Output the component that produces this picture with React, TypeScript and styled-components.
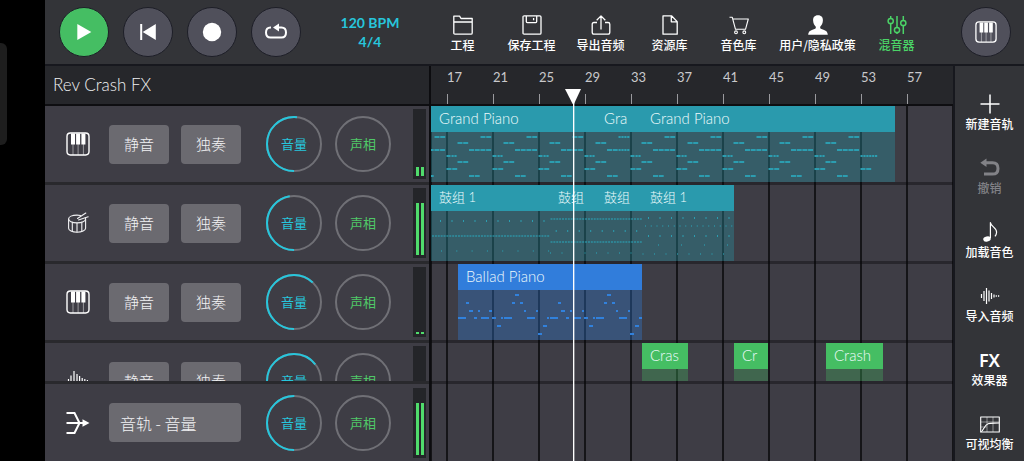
import React, { useId, useState } from 'react';
import styled, { createGlobalStyle, css } from 'styled-components';

const color = {
  bar: '#333438',
  edge: '#17181e',
  ruler: '#26272b',
  row: '#3e3d45',
  divider: '#29292d',
  control: '#6b6a70',
  round: '#50505b',
  cyan: '#27c6dc',
  green: '#4bd367',
  text: '#f2f2f4',
};

const LATIN = "Lato, 'Noto Sans CJK SC', sans-serif";
const CJK = "'Noto Sans CJK SC', 'Noto Sans', sans-serif";

const FIRST_BAR = 17;
const BAR_OFFSET = 15;
const FOUR_BARS = 46;

const barX = (bar: number) =>
  Math.max(0, Math.round(((bar - FIRST_BAR) * FOUR_BARS) / 4 + BAR_OFFSET));

const GlobalStyle = createGlobalStyle`
  * { box-sizing: border-box; }
  body { margin: 0; background: #000; overflow: hidden; }
  button { border: 0; padding: 0; margin: 0; background: none; font: inherit; color: inherit; cursor: pointer; }
`;

/* ---------- shell ---------- */

const Shell = styled.div`
  display: flex;
  flex-direction: column;
  height: 100vh;
  padding-left: 45px;
  background: #000;
  color: ${color.text};
  font-family: ${CJK};
`;

const Notch = styled.div`
  position: absolute;
  left: 0;
  top: 43px;
  width: 7px;
  height: 102px;
  border-radius: 0 6px 6px 0;
  background: #1e1e1e;
`;

const Header = styled.header`
  display: flex;
  flex: none;
  height: 66px;
  padding: 0 13px 0 14px;
  background: ${color.bar};
  border-bottom: 2px solid ${color.edge};
`;

const Transport = styled.div`
  display: flex;
  align-items: center;
  gap: 14px;
`;

const RoundButton = styled.button<{ $active?: boolean }>`
  display: flex;
  align-items: center;
  justify-content: center;
  width: 50px;
  height: 50px;
  border: 1px solid #1d1e27;
  border-radius: 50%;
  background: ${(p) => (p.$active ? '#45be63' : color.round)};
`;

const Tempo = styled.button`
  && {
    flex: 1;
    padding: 13px 0 0 11px;
    align-self: flex-start;
    color: ${color.cyan};
    font: 700 14px/19px ${LATIN};
  }
`;

const TempoLine = styled.span`
  display: block;
`;

const Menu = styled.nav`
  display: flex;
  align-items: flex-start;
  padding-top: 15px;
  margin-right: 30px;
`;

const Tool = styled.button<{ $wide?: boolean; $tone?: 'green' | 'dim' }>`
  display: flex;
  flex-direction: column;
  align-items: center;
  gap: 1px;
  width: ${(p) => (p.$wide ? 89 : 69)}px;
  color: ${(p) => (p.$tone === 'green' ? color.green : p.$tone === 'dim' ? '#828287' : '#fff')};
`;

const ToolLabel = styled.span`
  font: 500 12px/18px ${CJK};
  white-space: nowrap;
`;

const FxMark = styled.span`
  font: 600 18px/20px 'Noto Sans', sans-serif;
`;

const Body = styled.main`
  display: flex;
  flex: 1;
  min-height: 0;
`;

const Column = styled.section`
  display: flex;
  flex-direction: column;
  min-width: 0;
  background: ${color.row};
`;

const TrackColumn = styled(Column)`
  flex: none;
  width: 386px;
  border-right: 2px solid #0c0c0f;
`;

const stripHead = css`
  flex: none;
  height: 40px;
  background: ${color.ruler};
  border-bottom: 2px solid #0e0e11;
`;

const TrackTitle = styled.h1`
  ${stripHead}
  margin: 0;
  padding-left: 8px;
  font: 300 17px/38px ${LATIN};
  color: #f0f0f2;
`;

const Scroller = styled.div`
  flex: 1;
  min-height: 0;
  overflow: hidden;
`;

/* ---------- track rows ---------- */

const TrackRow = styled.div<{ $master?: boolean }>`
  display: flex;
  flex: none;
  align-items: center;
  height: ${(p) => (p.$master ? 80 : 79)}px;
  padding: 0 3px 0 21px;
  border: 0 solid ${color.divider};
  border-width: ${(p) => (p.$master ? '3px 0 0' : '0 0 3px')};
`;

const Switches = styled.div`
  display: flex;
  gap: 12px;
  width: 132px;
  margin: 0 25px 0 19px;
`;

const SwitchButton = styled.button<{ $left?: boolean }>`
  flex: 1;
  height: 39px;
  border-radius: 4px;
  background: ${color.control};
  && {
    padding: ${(p) => (p.$left ? '0 0 0 11px' : 0)};
    text-align: ${(p) => (p.$left ? 'left' : 'center')};
    font: 300 ${(p) => (p.$left ? 16 : 15)}px/22px ${CJK};
  }
`;

const Knobs = styled.div`
  display: flex;
  gap: 13px;
`;

const KnobLabel = styled.label<{ $tone: string }>`
  display: grid;
  place-items: center;
  width: 56px;
  height: 56px;
  color: ${(p) => p.$tone};
  font: 400 13px/18px ${CJK};
  > * { grid-area: 1 / 1; }
`;

const KnobInput = styled.input`
  width: 100%;
  height: 100%;
  margin: 0;
  opacity: 0;
`;

const Meter = styled.div`
  display: flex;
  align-items: flex-end;
  justify-content: center;
  gap: 2px;
  width: 13px;
  height: 70px;
  margin-left: auto;
  padding-bottom: 3px;
  background: #242529;
`;

const MeterBar = styled.span`
  width: 3px;
  background: #50dc6c;
`;

/* ---------- timeline ---------- */

const Timeline = styled(Column)`
  position: relative;
  flex: 1;
  overflow: hidden;
`;

const Ruler = styled.div`
  ${stripHead}
  display: flex;
  padding-left: 15px;
  overflow: hidden;
`;

const RulerMark = styled.div`
  display: flex;
  flex: none;
  flex-direction: column;
  justify-content: space-between;
  width: ${FOUR_BARS}px;
  padding: 2px 0 0 1px;
  font: 400 13px/18px ${LATIN};
  color: #c9c9cc;
  &::after {
    content: '';
    width: 1px;
    height: 10px;
    background: #9a9a9e;
  }
`;

const grid = css`
  background: repeating-linear-gradient(90deg, #151518 0 2px, transparent 2px ${FOUR_BARS}px) 15px 0;
`;

const LaneScroller = styled(Scroller)`
  ${grid}
`;

const Lane = styled.div`
  position: relative;
  height: 79px;
  border-bottom: 3px solid rgba(8, 8, 10, 0.4);
`;

const MasterLane = styled.div`
  ${grid}
  flex: none;
  height: 80px;
  border-top: 3px solid rgba(8, 8, 10, 0.4);
`;

const tones = {
  teal: { solid: '#2a9aad', body: 'rgba(42,154,173,0.34)', note: '#2c9db0' },
  blue: { solid: '#317ddb', body: 'rgba(49,125,219,0.34)', note: '#3181dc' },
  green: { solid: '#45be63', body: 'rgba(69,190,99,0.32)', note: '#45be63' },
};
type Tone = keyof typeof tones;

const ClipBox = styled.div<{ $tone: Tone }>`
  position: absolute;
  top: 0;
  height: 76px;
  overflow: hidden;
  background: ${(p) => tones[p.$tone].body};
`;

const ClipName = styled.div<{ $tone: Tone; $small?: boolean }>`
  height: 26px;
  padding-left: 8px;
  background: ${(p) => tones[p.$tone].solid};
  color: #eefafc;
  font: 300 ${(p) => (p.$small ? 13 : 15)}px/25px ${LATIN};
  white-space: nowrap;
`;

const Notes = styled.svg`
  position: absolute;
  top: 0;
  left: 0;
  pointer-events: none;
`;

const Playhead = styled.div`
  position: absolute;
  top: 23px;
  bottom: 0;
  left: 134px;
  width: 16px;
  background: linear-gradient(90deg, #fff 1px, rgba(255, 255, 255, 0.35) 1px) 8px 0 / 2px 100% no-repeat;
  &::before {
    content: '';
    display: block;
    height: 15px;
    background: #fff;
    clip-path: polygon(0 0, 100% 0, 56% 100%, 48% 100%);
  }
`;

const Side = styled.aside`
  display: flex;
  flex: none;
  flex-direction: column;
  align-items: center;
  gap: 25px;
  width: 71px;
  padding-top: 28px;
  overflow: hidden;
  background: ${color.bar};
  border-left: 2px solid ${color.edge};
`;

/* ---------- icons ---------- */

const Stroke = ({ children, w = 1.3 }: { children: React.ReactNode; w?: number }) => (
  <svg width="20" height="20" viewBox="0 0 20 20" fill="none" stroke="currentColor" strokeWidth={w} strokeLinejoin="round" aria-hidden="true">
    {children}
  </svg>
);

const PianoIcon = ({ size }: { size: number }) => (
  <svg width={size} height={size} viewBox="0 0 24 24" fill="none" stroke="#fff" aria-hidden="true">
    <rect x="1" y="1" width="22" height="22" rx="3.4" strokeWidth="1.4" />
    <path d="M5 1.5h4v11H5zM10.1 1.5h4v11h-4zM15.4 1.5h4v11h-4z" fill="#fff" stroke="none" />
    <path d="M7 12v11M12.1 12v11M17.4 12v11" strokeWidth=".8" opacity=".6" />
  </svg>
);

const DrumIcon = () => (
  <svg width="24" height="24" viewBox="0 0 24 24" fill="none" stroke="#f0f0f2" strokeWidth="1.1" strokeLinecap="round" aria-hidden="true">
    <path d="M14.500 4.500C13.500 4.200 12.300 4.100 11 4.100c-4.900 0-8.400 1.600-8.400 3.800s3.500 4 8.400 4 8.600-1.800 8.600-4c0-.4-.1-.8-.3-1.100" />
    <path d="M2.600 8v9.200c0 2.200 3.500 4 8.400 4s8.600-1.800 8.600-4V8" />
    <path d="M6.300 11.300v9M11 12v9M15.800 11.300v9" />
    <path d="M11.500 7.500 19.800 2M12.500 8.900 22.200 5.800" />
  </svg>
);

const WaveTrackIcon = () => (
  <svg width="24" height="24" viewBox="0 0 24 24" stroke="#fff" strokeWidth="1.2" aria-hidden="true">
    <path d="M2.500 10v4M5 6.500v11M8 2v20M11 5v14M13.600 7v10M16.200 9v6M18.800 10v4M21.400 11v2" />
  </svg>
);

const MasterIcon = () => (
  <svg width="24" height="24" viewBox="0 0 24 24" fill="none" stroke="#fff" strokeWidth="2" aria-hidden="true">
    <path d="M.5 2h8l5 10-5 10H.5M.5 12h17" />
    <path d="M16.500 8.200 23.500 12l-7 3.800z" fill="#fff" stroke="none" />
  </svg>
);

const icons = {
  folder: (
    <Stroke>
      <path d="M.8 18V1.200h5.800l1.400 2.300h11.200V18q0 1.200-1.200 1.200H2Q.8 19.200.8 18zM.8 7h18.400" />
    </Stroke>
  ),
  save: (
    <Stroke>
      <path d="M1 2q0-1.200 1.200-1.200h15.600Q19 .8 19 2v16q0 1.200-1.200 1.200H2.200Q1 19.200 1 18z" />
      <path d="M4.300 1v5.600q0 1 1 1h8.400q1 0 1-1V1M11.600 3v2.300" />
    </Stroke>
  ),
  share: (
    <Stroke>
      <path d="M6 7.500H3Q1.200 7.500 1.200 9.300v8Q1.200 19.200 3 19.200h14q1.800 0 1.800-1.900v-8Q18.800 7.500 17 7.500h-3M10 14.500V1M5.700 5.200 10 .9l4.300 4.300" />
    </Stroke>
  ),
  file: (
    <Stroke>
      <path d="M3 .8h8.500l5.700 5.800v12.600H3zM11.300 1v5.800H17" />
    </Stroke>
  ),
  cart: (
    <Stroke w={1.1}>
      <path d="M.5 2.300h2.800l3.200 12h10l2.800-10.300H4" />
      <circle cx="7" cy="17.300" r="1.400" />
      <circle cx="15.300" cy="17.300" r="1.400" />
    </Stroke>
  ),
  user: (
    <svg width="20" height="20" viewBox="0 0 20 20" fill="currentColor" aria-hidden="true">
      <path d="M10 .2c3.600 0 5.100 2.400 4.900 5.400-.1 2.700-1.300 5-2.700 6.100-.2 1.300.2 1.900 1.300 2.300 3.800 1.300 6 1.900 6.300 5.800H.2c.3-3.900 2.500-4.500 6.300-5.800 1.100-.4 1.500-1 1.300-2.300C6.400 10.600 5.200 8.300 5.100 5.600 4.900 2.600 6.400.2 10 .2z" />
    </svg>
  ),
  mixer: (
    <Stroke w={1.500}>
      <path d="M3.700 1v2.300M3.700 8.700V19M10 1v11.300M10 17.700V19M16.300 1v4.300M16.300 10.700V19" />
      <circle cx="3.700" cy="6" r="2.600" />
      <circle cx="10" cy="15" r="2.600" />
      <circle cx="16.300" cy="8" r="2.600" />
    </Stroke>
  ),
  plus: (
    <Stroke w={1.500}>
      <path d="M10 .5v19M.5 10h19" />
    </Stroke>
  ),
  undo: (
    <Stroke w={3}>
      <path d="M5 4.700h7.500q5.500 0 5.500 5.700t-5.500 5.700H4" />
      <path d="M6.500.5v8.400L.3 4.700z" fill="currentColor" stroke="none" />
    </Stroke>
  ),
  note: (
    <Stroke w={1.200}>
      <path d="M10.400 16V.6c.4 3.800 6.400 5.200 6.200 9.600-.1 1.900-.8 3.100-1.600 4.200" />
      <ellipse cx="7" cy="17" rx="3.800" ry="2.500" transform="rotate(-12 7 17)" fill="currentColor" stroke="none" />
    </Stroke>
  ),
  wave: (
    <Stroke w={1.200}>
      <path d="M1.500 8v4M4 5v10M6.500 2v16M9 4.500v11M11.500 7v6M14 8.500v3M16.300 9.200v1.600M18.600 9.200v1.600" />
    </Stroke>
  ),
  eq: (
    <Stroke w={1.100}>
      <rect x=".7" y="3" width="18.600" height="15" />
      <path d="M.7 8h18.600M.7 13h6M7 3v15M13 3v15" opacity=".5" strokeWidth=".9" />
      <path d="M.7 18C3.500 17.500 4 11 8 9.700c2-.7 7-.4 11-.7" />
    </Stroke>
  ),
};

const PlayIcon = () => (
  <svg width="20" height="20" viewBox="0 0 20 20" fill="#fff" aria-hidden="true">
    <path d="M3.300 2 17.300 10l-14 8z" />
  </svg>
);
const RewindIcon = () => (
  <svg width="20" height="20" viewBox="0 0 20 20" fill="#fff" aria-hidden="true">
    <path d="M2.200 2h2v16h-2zM17.800 2v16L4.700 10z" />
  </svg>
);
const RecordIcon = () => (
  <svg width="20" height="20" viewBox="0 0 20 20" fill="#fff" aria-hidden="true">
    <circle cx="10" cy="10" r="9.200" />
  </svg>
);
const LoopIcon = () => (
  <svg width="24" height="20" viewBox="0 0 24 20" fill="none" stroke="#fff" strokeWidth="2" aria-hidden="true">
    <path d="M7 5.500H6.500Q2 5.500 2 10.500t4.500 5h11q4.500 0 4.500-5t-4.500-5H14" />
    <path d="M15 1.500v8L9 5.500z" fill="#fff" stroke="none" />
  </svg>
);

/* ---------- controls ---------- */

const R = 27;
const TURN = 2 * Math.PI * R;

function Knob({ label, tone, sweep }: { label: string; tone: string; sweep: number }) {
  const id = useId();
  return (
    <KnobLabel $tone={tone} htmlFor={id}>
      <svg width="56" height="56" viewBox="0 0 56 56" fill="none" strokeWidth="2" aria-hidden="true">
        <circle cx="28" cy="28" r={R} stroke="#707076" />
        {sweep > 0 && (
          <circle cx="28" cy="28" r={R} stroke={color.cyan} strokeDasharray={`${(TURN * sweep) / 360} ${TURN}`} transform="rotate(90 28 28)" />
        )}
      </svg>
      <span>{label}</span>
      <KnobInput id={id} type="range" min={0} max={360} defaultValue={sweep} />
    </KnobLabel>
  );
}

interface TrackData {
  name: string;
  icon: React.ReactNode;
  sweep: number;
  level: number;
  master?: boolean;
}

function Track({ icon, sweep, level, master }: TrackData) {
  return (
    <TrackRow $master={master}>
      {icon}
      <Switches>
        {master ? (
          <SwitchButton $left>音轨 - 音量</SwitchButton>
        ) : (
          <>
            <SwitchButton>静音</SwitchButton>
            <SwitchButton>独奏</SwitchButton>
          </>
        )}
      </Switches>
      <Knobs>
        <Knob label="音量" tone={color.cyan} sweep={sweep} />
        <Knob label="声相" tone="#50c868" sweep={0} />
      </Knobs>
      <Meter>
        <MeterBar style={{ height: level }} />
        <MeterBar style={{ height: level }} />
      </Meter>
    </TrackRow>
  );
}

const tracks: TrackData[] = [
  { name: 'piano', icon: <PianoIcon size={24} />, sweep: 186, level: 9 },
  { name: 'drums', icon: <DrumIcon />, sweep: 170, level: 52 },
  { name: 'ballad', icon: <PianoIcon size={24} />, sweep: 223, level: 2 },
  { name: 'crash', icon: <WaveTrackIcon />, sweep: 231, level: 0 },
];

/* ---------- notes ---------- */

type Run = [x: number, y: number, w: number];

function pianoNotes(): Run[] {
  const out: Run[] = [];
  for (let k = -1; k < 10; k++) {
    const x = 15.500 + k * FOUR_BARS;
    const dashes = (from: number, count: number, y: number) => {
      for (let i = 0; i < count; i++) out.push([x + from + i * 5.700, y, 5]);
    };
    const fine = (from: number, count: number, y: number) => {
      for (let i = 0; i < count; i++) out.push([x + from + i * 2.900, y, 2.200]);
    };
    if (k === 9) {
      fine(0, 6, 50);
      dashes(0, 2, 63);
      break;
    }
    out.push([x, 50, 4]);
    fine(5, 2, 50);
    dashes(0, 2, 63);
    dashes(11, 2, 37);
    dashes(11, 2, 56);
    dashes(22.500, 2, 70);
    if (k === 3) {
      fine(34, 4, 31);
      dashes(22.500, 2, 44);
      fine(34, 4, 44);
    } else {
      dashes(34, 2, 31);
      dashes(22.500, 4, 44);
    }
  }
  return out;
}

function every(from: number, to: number, step: number, y: number, w = 1): Run[] {
  const out: Run[] = [];
  for (let x = from; x < to; x += step) out.push([x, y, w]);
  return out;
}

const drumHits: Run[] = [
  ...every(9, 119, 11.500, 36),
  ...every(124.700, 211, 11.500, 46),
  ...every(217, 303, 11.500, 33),
  ...every(217, 303, 11.500, 51),
];
const softHits: Run[] = [
  ...every(1, 118, 2.880, 50, 2),
  ...every(119.500, 211, 2.880, 33, 2),
  ...every(119.500, 211, 2.880, 56, 2),
  ...every(10, 118, 15.300, 65),
  ...every(119, 211, 11.500, 67),
  ...every(214, 303, 5.750, 40),
  ...every(227, 303, 23, 59),
  ...every(211.500, 303, 11.500, 68),
];

const balladRows: [number, [number, number][]][] = [
  [31, [[57, 4], [149, 4]]],
  [39, [[8, 3], [54, 3], [62, 3], [100, 3], [146, 3], [154, 3]]],
  [47, [[11, 4], [20, 2], [31, 3], [66, 2], [78, 2], [103, 4], [112, 2], [124, 2], [158, 2], [170, 2]]],
  [54, [[0, 8], [16, 3], [23, 8], [34, 4], [43, 2], [46, 8], [69, 8], [89, 2], [92, 8], [108, 3], [116, 7], [126, 4], [135, 2], [138, 8], [161, 8], [181, 3]]],
  [62, [[39, 4], [85, 4], [131, 4], [177, 4]]],
  [70, [[80, 4], [172, 4]]],
];
const balladNotes: Run[] = balladRows.flatMap(([y, runs]) => runs.map(([x, w]): Run => [x + 27, y, w]));

function NoteLayer({ runs, soft = [], fill }: { runs: Run[]; soft?: Run[]; fill: string }) {
  return (
    <Notes width="523" height="76" fill={fill} aria-hidden="true">
      {runs.map(([x, y, w], i) => (
        <rect key={i} x={x} y={y - 1} width={w} height="2" />
      ))}
      <g opacity=".6">
        {soft.map(([x, y, w], i) => (
          <rect key={i} x={x} y={y} width={w} height="2" />
        ))}
      </g>
    </Notes>
  );
}

interface ClipData {
  tone: Tone;
  from: number;
  to: number;
  name: string;
  small?: boolean;
}

function Clip({ tone, from, to, name, small }: ClipData) {
  const left = barX(from);
  return (
    <ClipBox $tone={tone} style={{ left, width: barX(to) - left }}>
      <ClipName $tone={tone} $small={small}>{name}</ClipName>
    </ClipBox>
  );
}

const menu = [
  { icon: icons.folder, label: '工程' },
  { icon: icons.save, label: '保存工程' },
  { icon: icons.share, label: '导出音频' },
  { icon: icons.file, label: '资源库' },
  { icon: icons.cart, label: '音色库' },
  { icon: icons.user, label: '用户/隐私政策', wide: true },
  { icon: icons.mixer, label: '混音器', tone: 'green' as const },
];

const side = [
  { icon: icons.plus, label: '新建音轨' },
  { icon: icons.undo, label: '撤销', tone: 'dim' as const },
  { icon: icons.note, label: '加载音色' },
  { icon: icons.wave, label: '导入音频' },
  { icon: <FxMark>FX</FxMark>, label: '效果器' },
  { icon: icons.eq, label: '可视均衡' },
];

const rulerBars = Array.from({ length: 11 }, (_, i) => FIRST_BAR + i * 4);

export default function App() {
  const [playing, setPlaying] = useState(true);
  return (
    <Shell>
      <GlobalStyle />
      <Notch />
      <Header>
        <Transport>
          <RoundButton $active={playing} aria-label="播放" onClick={() => setPlaying(!playing)}><PlayIcon /></RoundButton>
          <RoundButton aria-label="回到开头"><RewindIcon /></RoundButton>
          <RoundButton aria-label="录音"><RecordIcon /></RoundButton>
          <RoundButton aria-label="循环"><LoopIcon /></RoundButton>
        </Transport>
        <Tempo>
          <TempoLine>120 BPM</TempoLine>
          <TempoLine>4/4</TempoLine>
        </Tempo>
        <Menu>
          {menu.map((m) => (
            <Tool key={m.label} $wide={m.wide} $tone={m.tone}>
              {m.icon}
              <ToolLabel>{m.label}</ToolLabel>
            </Tool>
          ))}
        </Menu>
        <Transport>
          <RoundButton aria-label="键盘"><PianoIcon size={22} /></RoundButton>
        </Transport>
      </Header>
      <Body>
        <TrackColumn>
          <TrackTitle>Rev Crash FX</TrackTitle>
          <Scroller>
            {tracks.map((t) => (
              <Track key={t.name} {...t} />
            ))}
          </Scroller>
          <Track name="master" icon={<MasterIcon />} sweep={180} level={52} master />
        </TrackColumn>
        <Timeline>
          <Ruler>
            {rulerBars.map((bar) => (
              <RulerMark key={bar}>{bar}</RulerMark>
            ))}
          </Ruler>
          <LaneScroller>
            <Lane>
              <Clip tone="teal" from={15} to={30} name="Grand Piano" />
              <Clip tone="teal" from={30} to={34} name="Gra" />
              <Clip tone="teal" from={34} to={56} name="Grand Piano" />
              <NoteLayer runs={pianoNotes()} fill={tones.teal.note} />
            </Lane>
            <Lane>
              <Clip tone="teal" from={15} to={26} name="鼓组 1" small />
              <Clip tone="teal" from={26} to={30} name="鼓组" small />
              <Clip tone="teal" from={30} to={34} name="鼓组" small />
              <Clip tone="teal" from={34} to={42} name="鼓组 1" small />
              <NoteLayer runs={drumHits} soft={softHits} fill={tones.teal.note} />
            </Lane>
            <Lane>
              <Clip tone="blue" from={18} to={34} name="Ballad Piano" />
              <NoteLayer runs={balladNotes} fill={tones.blue.note} />
            </Lane>
            <Lane>
              <Clip tone="green" from={34} to={38} name="Cras" />
              <Clip tone="green" from={42} to={45} name="Cr" />
              <Clip tone="green" from={50} to={55} name="Crash" />
            </Lane>
          </LaneScroller>
          <MasterLane />
          <Playhead />
        </Timeline>
        <Side>
          {side.map((s) => (
            <Tool key={s.label} $tone={s.tone}>
              {s.icon}
              <ToolLabel>{s.label}</ToolLabel>
            </Tool>
          ))}
        </Side>
      </Body>
    </Shell>
  );
}
